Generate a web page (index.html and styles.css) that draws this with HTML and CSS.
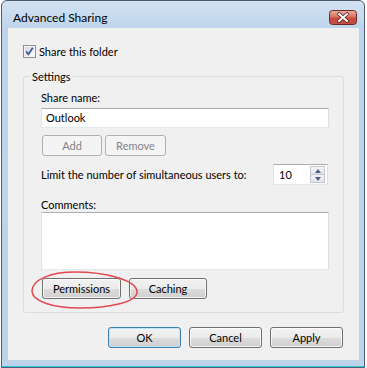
FILE: index.html
```html
<!DOCTYPE html>
<html lang="en">
<head>
	<meta charset="UTF-8">
	<title>Advanced Sharing</title>
	<link rel="stylesheet" href="styles.css">
</head>
<body>
	<div class="window">
		<div class="titlebar">
			<span class="title">Advanced Sharing</span>
			<span class="close">
				<svg width="28" height="15" viewBox="0 0 28 15">
					<defs>
						<linearGradient id="red" x1="0" y1="0" x2="0" y2="1">
							<stop offset="0" stop-color="#eab1a3"/>
							<stop offset="0.45" stop-color="#d87360"/>
							<stop offset="0.55" stop-color="#c94a3c"/>
							<stop offset="1" stop-color="#c0504a"/>
						</linearGradient>
					</defs>
					<rect x="0.5" y="0.5" width="27" height="14" rx="3" fill="url(#red)" stroke="#6b2a28"/>
					<path d="M10 4 L18 11 M18 4 L10 11" stroke="#5a2220" stroke-width="3.6" stroke-linecap="round"/>
					<path d="M10 4 L18 11 M18 4 L10 11" stroke="#ffffff" stroke-width="2" stroke-linecap="round"/>
				</svg>
			</span>
		</div>
		<div class="client">
			<div class="check-row">
				<svg class="checkbox" width="13" height="13" viewBox="0 0 13 13">
					<defs>
						<linearGradient id="box" x1="0" y1="0" x2="1" y2="1">
							<stop offset="0" stop-color="#d6d8dc"/>
							<stop offset="1" stop-color="#fbfbfb"/>
						</linearGradient>
					</defs>
					<rect x="0.5" y="0.5" width="12" height="12" fill="#f4f4f4" stroke="#8e8f8f"/>
					<rect x="2" y="2" width="9" height="9" fill="url(#box)"/>
					<path d="M3.2 6.4 L5.4 9.2 L9.8 2.8" fill="none" stroke="#4058a0" stroke-width="1.8"/>
				</svg>
				<span>Share this folder</span>
			</div>

			<div class="group">
				<span class="group-title">Settings</span>
				<div class="field-label">Share name:</div>
				<div class="textbox">Outlook</div>
				<div class="btn-row">
					<button class="btn add" disabled>Add</button>
					<button class="btn remove" disabled>Remove</button>
				</div>
				<div class="limit-row">
					<span>Limit the number of simultaneous users to:</span>
					<div class="spinner">
						<span class="spin-value">10</span>
						<div class="spin">
							<span class="spin-btn"><span class="arrow up"></span></span>
							<span class="spin-btn"><span class="arrow down"></span></span>
						</div>
					</div>
				</div>
				<div class="field-label comments">Comments:</div>
				<div class="textarea"></div>
				<div class="btn-row perm-row">
					<button class="btn perm">Permissions</button>
					<button class="btn caching">Caching</button>
					<svg class="circled" width="112" height="42" viewBox="0 0 112 42">
						<path d="M3 22 C3 11, 21 3, 46 3 C76 3, 108 11, 108 23 C108 33, 81 39, 51 39 C23 39, 3 32, 3 22 Z" fill="none" stroke="#e2494f" stroke-width="1.5"/>
					</svg>
				</div>
			</div>

			<div class="footer">
				<button class="btn dialog default">OK</button>
				<button class="btn dialog">Cancel</button>
				<button class="btn dialog">Apply</button>
			</div>
		</div>
	</div>
</body>
</html>
```

FILE: styles.css
```css
body {
	margin: 0;
	background: #ffffff;
	font-family: Lato, "Noto Sans", sans-serif;
	font-size: 11px;
	color: #000000;
}

.window {
	margin-left: 1px;
	width: 364px;
	height: 368px;
	box-sizing: border-box;
	border: 1px solid #4e5d6e;
	border-radius: 6px 6px 0 0;
	background: linear-gradient(#d3e2f2, #bed4ec 28px, #bcd3ea);
	padding: 0 5px 0 6px;
	box-shadow: inset 0 -1px #2ec5e4;
}

.titlebar {
	height: 27px;
	box-sizing: border-box;
	display: flex;
	align-items: center;
	justify-content: space-between;
	padding: 5px 2px 0 5px;
}

.title {
	font-size: 12px;
	line-height: 15px;
}

.close svg {
	display: block;
}

.client {
	height: 332px;
	box-sizing: border-box;
	background: #f0f0f0;
	padding-top: 16px;
}

.check-row {
	display: flex;
	align-items: center;
	gap: 3px;
	margin-left: 15px;
	line-height: 15px;
}

.checkbox {
	display: block;
}

.group {
	position: relative;
	margin: 17px 15px 0;
	border: 1px solid #d5dfe5;
	border-radius: 3px;
	padding: 13px 14px 13px 17px;
}

.group-title {
	position: absolute;
	top: -8px;
	left: 6px;
	padding: 0 2px;
	background: #f0f0f0;
	line-height: 15px;
}

.field-label {
	line-height: 15px;
}

.field-label.comments {
	margin-top: 12px;
}

.textbox {
	margin-top: 3px;
	height: 20px;
	box-sizing: border-box;
	border: 1px solid;
	border-color: #abadb3 #dbdfe6 #e3e9ef #e2e3ea;
	background: #ffffff;
	padding-left: 4px;
	line-height: 18px;
}

.btn-row {
	display: flex;
	gap: 3px;
	margin-top: 7px;
	padding-left: 1px;
}

.btn {
	height: 21px;
	box-sizing: border-box;
	padding: 0;
	font-family: inherit;
	font-size: 11px;
	color: #000000;
	border: 1px solid #707070;
	border-radius: 3px;
	background: linear-gradient(#f2f2f2, #ebebeb 50%, #dddddd 50%, #cfcfcf);
	box-shadow: inset 0 0 0 1px rgba(255, 255, 255, 0.75);
}

.btn:disabled {
	color: #838383;
	border-color: #adb2b5;
	background: #f4f4f4;
	box-shadow: none;
}

.add {
	width: 60px;
}

.remove {
	width: 61px;
}

.limit-row {
	display: flex;
	justify-content: space-between;
	align-items: center;
	margin-top: 8px;
	margin-right: 1px;
	line-height: 15px;
}

.spinner {
	width: 55px;
	height: 21px;
	box-sizing: border-box;
	display: flex;
	justify-content: space-between;
	border: 1px solid;
	border-color: #abadb3 #dbdfe6 #e3e9ef #e2e3ea;
	background: #ffffff;
}

.spin-value {
	padding-left: 5px;
	line-height: 19px;
}

.spin {
	display: flex;
	flex-direction: column;
	margin: 1px 2px 1px 0;
	width: 15px;
}

.spin-btn {
	flex: 1;
	display: flex;
	align-items: center;
	justify-content: center;
	border: 1px solid #c3c8cf;
	background: linear-gradient(#f4f5f7, #e2e5ea);
}

.spin-btn + .spin-btn {
	border-top: none;
}

.arrow {
	width: 0;
	height: 0;
	border-left: 3.5px solid transparent;
	border-right: 3.5px solid transparent;
}

.arrow.up {
	border-bottom: 4px solid #4d6185;
}

.arrow.down {
	border-top: 4px solid #4d6185;
}

.textarea {
	height: 58px;
	box-sizing: border-box;
	border: 1px solid;
	border-color: #abadb3 #dbdfe6 #e3e9ef #e2e3ea;
	background: #ffffff;
}

.perm-row {
	position: relative;
	margin-top: 8px;
	gap: 8px;
}

.perm {
	width: 79px;
}

.caching {
	width: 78px;
}

.circled {
	position: absolute;
	left: -12px;
	top: -9px;
}

.footer {
	display: flex;
	justify-content: flex-end;
	gap: 8px;
	margin-top: 14px;
	padding-right: 16px;
}

.dialog {
	width: 73px;
}

.default {
	border-color: #3c7fb1;
	box-shadow: inset 0 0 0 1px #bde4f8;
}
```
